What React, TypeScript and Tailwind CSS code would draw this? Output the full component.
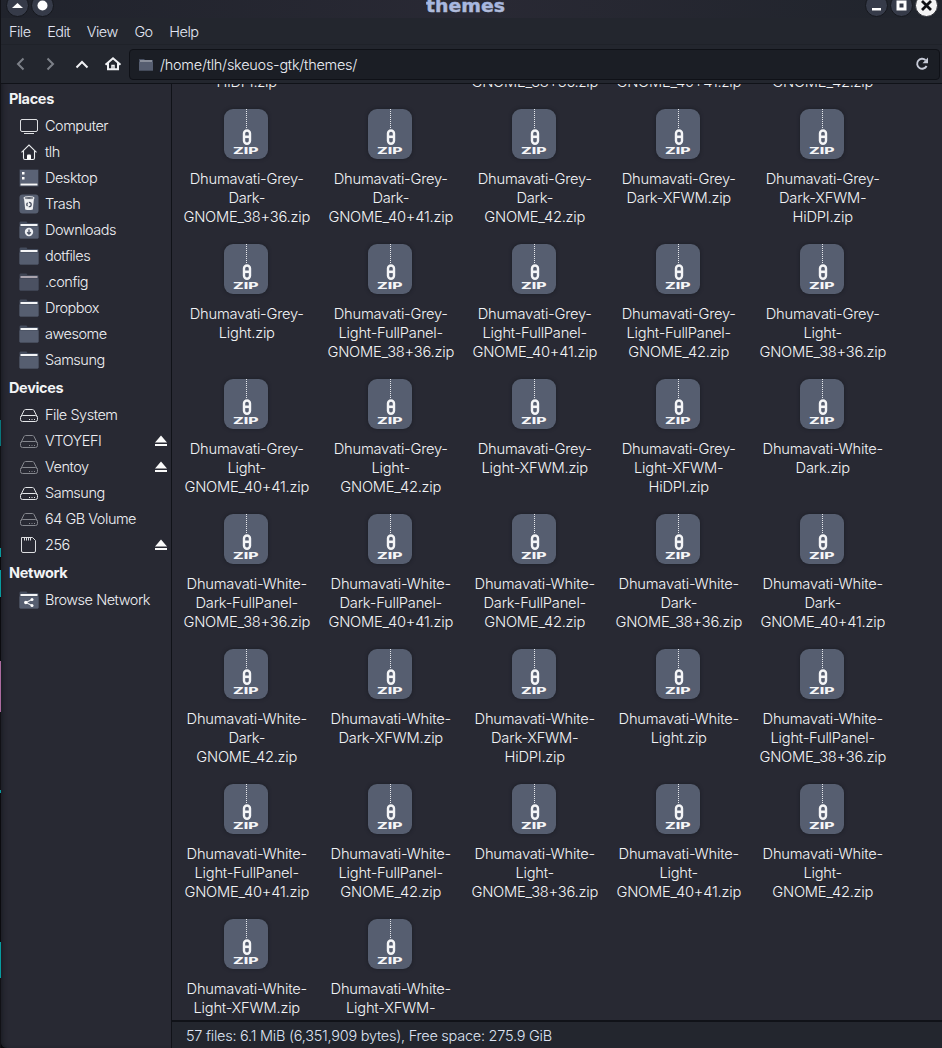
import React from "react";

const files: string[][][] = [
  [["", "", "HiDPI.zip"], ["", "", ""], ["", "", "GNOME_38+36.zip"], ["", "", "GNOME_40+41.zip"], ["", "", "GNOME_42.zip"]],
  [
    ["Dhumavati-Grey-", "Dark-", "GNOME_38+36.zip"],
    ["Dhumavati-Grey-", "Dark-", "GNOME_40+41.zip"],
    ["Dhumavati-Grey-", "Dark-", "GNOME_42.zip"],
    ["Dhumavati-Grey-", "Dark-XFWM.zip"],
    ["Dhumavati-Grey-", "Dark-XFWM-", "HiDPI.zip"],
  ],
  [
    ["Dhumavati-Grey-", "Light.zip"],
    ["Dhumavati-Grey-", "Light-FullPanel-", "GNOME_38+36.zip"],
    ["Dhumavati-Grey-", "Light-FullPanel-", "GNOME_40+41.zip"],
    ["Dhumavati-Grey-", "Light-FullPanel-", "GNOME_42.zip"],
    ["Dhumavati-Grey-", "Light-", "GNOME_38+36.zip"],
  ],
  [
    ["Dhumavati-Grey-", "Light-", "GNOME_40+41.zip"],
    ["Dhumavati-Grey-", "Light-", "GNOME_42.zip"],
    ["Dhumavati-Grey-", "Light-XFWM.zip"],
    ["Dhumavati-Grey-", "Light-XFWM-", "HiDPI.zip"],
    ["Dhumavati-White-", "Dark.zip"],
  ],
  [
    ["Dhumavati-White-", "Dark-FullPanel-", "GNOME_38+36.zip"],
    ["Dhumavati-White-", "Dark-FullPanel-", "GNOME_40+41.zip"],
    ["Dhumavati-White-", "Dark-FullPanel-", "GNOME_42.zip"],
    ["Dhumavati-White-", "Dark-", "GNOME_38+36.zip"],
    ["Dhumavati-White-", "Dark-", "GNOME_40+41.zip"],
  ],
  [
    ["Dhumavati-White-", "Dark-", "GNOME_42.zip"],
    ["Dhumavati-White-", "Dark-XFWM.zip"],
    ["Dhumavati-White-", "Dark-XFWM-", "HiDPI.zip"],
    ["Dhumavati-White-", "Light.zip"],
    ["Dhumavati-White-", "Light-FullPanel-", "GNOME_38+36.zip"],
  ],
  [
    ["Dhumavati-White-", "Light-FullPanel-", "GNOME_40+41.zip"],
    ["Dhumavati-White-", "Light-FullPanel-", "GNOME_42.zip"],
    ["Dhumavati-White-", "Light-", "GNOME_38+36.zip"],
    ["Dhumavati-White-", "Light-", "GNOME_40+41.zip"],
    ["Dhumavati-White-", "Light-", "GNOME_42.zip"],
  ],
  [
    ["Dhumavati-White-", "Light-XFWM.zip"],
    ["Dhumavati-White-", "Light-XFWM-"],
  ],
];

function ZipIcon() {
  return (
    <div className="flex h-[50px] w-[44px] flex-col items-center rounded-[9px] bg-[#565e70] shadow-[0_0_3px_1px_#20222b]">
      <svg width="44" height="37" viewBox="0 0 44 37" className="shrink-0">
        <path d="M22.5 0V20" stroke="#e6e8ec" strokeWidth="1" strokeDasharray="1 1" />
        <rect x="20" y="21.500" width="6" height="13.300" rx="3" fill="none" stroke="#f4f5f7" strokeWidth="2.400" />
        <path d="M20 27.800h6" stroke="#f4f5f7" strokeWidth="2.600" />
      </svg>
      <svg width="26" height="9" viewBox="0 0 26 9" className="shrink-0 overflow-visible">
        <text x="0" y="8" textLength="25.500" lengthAdjust="spacingAndGlyphs" fontFamily="Inter" fontSize="9.500" fontWeight="800" letterSpacing="0" fill="#f4f5f7">
          ZIP
        </text>
      </svg>
    </div>
  );
}

function File({ lines }: { lines: string[] }) {
  return (
    <div className="flex h-[135px] flex-col items-center">
      <ZipIcon />
      <div className="mt-[11px] text-center text-[14.700px] leading-[19px] tracking-[-0.23px] whitespace-nowrap text-[#f2f3f5]">
        {lines.map((l, i) => (
          <div key={i} className="h-[19px] pl-[1.500px]">{l}</div>
        ))}
      </div>
    </div>
  );
}

function Folder({ kind, dim }: { kind?: string; dim?: boolean }) {
  const body = dim ? "#4b5162" : "#565e70";
  return (
    <svg width="20" height="18" viewBox="0 0 20 18">
      <path d="M0.500 2Q0.500 0.500 1.500 0.500H7.500l1 1.500h10q1 0 1 1v13.500q0 1-1 1h-17q-1 0-1-1z" fill={dim ? "#3f4554" : "#444c5d"} />
      <path d="M0.500 5.500h19v11q0 1-1 1h-17q-1 0-1-1z" fill={body} />
      <path d="M1.500 4h17" stroke={dim ? "#aaa4ae" : "#f4f5f7"} strokeWidth="2" />
      {kind === "down" && (
        <>
          <circle cx="10" cy="11" r="4.200" fill="#eceef2" />
          <path d="M10 8.500v4M8.200 11.200l1.800 1.900 1.800-1.900" stroke="#4b5264" strokeWidth="1.300" fill="none" />
        </>
      )}
      {kind === "share" && (
        <>
          <path d="M13 8.500L7 11.500l6 3" stroke="#eceef2" strokeWidth="1.200" fill="none" />
          <circle cx="13" cy="8.500" r="1.500" fill="#fff" />
          <circle cx="6.800" cy="11.500" r="1.700" fill="#fff" />
          <circle cx="13" cy="14.500" r="1.500" fill="#fff" />
        </>
      )}
    </svg>
  );
}

function SideIcon({ kind }: { kind: string }) {
  switch (kind) {
    case "computer":
      return (
        <svg width="20" height="18" viewBox="0 0 20 18" fill="none" stroke="#dedfe2" strokeWidth="1">
          <rect x="1.500" y="2.500" width="17" height="12" rx="1.500" />
          <path d="M5 16.500h10" />
        </svg>
      );
    case "home":
      return (
        <svg width="20" height="18" viewBox="0 0 20 18" fill="none" stroke="#eceef0" strokeWidth="1.100">
          <path d="M2.500 9.300L10 2l7.500 7.300M4.500 8v7q0 1.500 1.500 1.500h8q1.500 0 1.500-1.500V8" />
          <path d="M8 16.500v-4q0-1 1-1h2q1 0 1 1v4z" fill="#fff" stroke="none" />
        </svg>
      );
    case "desktop":
      return (
        <svg width="20" height="18" viewBox="0 0 20 18">
          <path d="M0.500 0.500h19v17h-19z" fill="#454d5d" />
          <path d="M1 1h18v13H1z" fill="#5a6275" />
          <path d="M1.500 15.500h17" stroke="#f7f7f8" strokeWidth="2" />
          <path d="M3 3h2.500v2.500H3zM3 8h2.500v2.500H3z" fill="#fff" />
        </svg>
      );
    case "trash":
      return (
        <svg width="20" height="20" viewBox="0 0 20 20">
          <rect x="0.500" y="0.500" width="19" height="19" rx="3" fill="#565e70" />
          <path d="M5 4h10l-1.200 11.500q-3.800 1-7.600 0z" fill="#f1f2f4" />
          <ellipse cx="10" cy="4" rx="5.300" ry="1.300" fill="#3c4251" stroke="#f1f2f4" strokeWidth="1" />
          <circle cx="10" cy="10.500" r="2.200" fill="none" stroke="#4a5162" strokeWidth="1.300" strokeDasharray="3.400 1.200" />
        </svg>
      );
    case "drive":
    case "drivedim":
      return (
        <svg width="20" height="18" viewBox="0 0 20 18" fill="none" stroke={kind === "drive" ? "#e4e6e9" : "#85878e"} strokeWidth="1">
          <path d="M2 10.500L5 4.500Q5.500 3.500 6.500 3.500h7q1 0 1.500 1l3 6" />
          <rect x="1.500" y="9.500" width="17" height="6" rx="2" />
          <path d="M10 13.500h1M12.500 13.500h1M15 13.500h1" />
        </svg>
      );
    case "card":
      return (
        <svg width="20" height="18" viewBox="0 0 20 18" fill="none" stroke="#dcdde0" strokeWidth="1">
          <path d="M2.500 1.500h11l3 3v10.500q0 1.500-1.500 1.500H4q-1.500 0-1.500-1.500z" />
          <path d="M5.500 2v2.500M7.500 2v2.500M9.500 2v2.500M11.500 2v2.500" />
        </svg>
      );
    case "down":
    case "share":
      return <Folder kind={kind} />;
    case "dim":
      return <Folder dim />;
    default:
      return <Folder />;
  }
}

function Section({ title, items }: { title: string; items: [string, string, boolean?][] }) {
  return (
    <section>
      <h2 className="flex h-7 items-center pl-2 text-[14.500px] font-bold tracking-[-0.35px] text-[#f2f3f5]">{title}</h2>
      <ul>
        {items.map(([label, icon, eject]) => (
          <li key={label} className="flex h-[26px] items-center pr-[3px] pl-[18px]">
            <SideIcon kind={icon} />
            <span className="ml-1.5 flex-1 tracking-[-0.48px] whitespace-nowrap">{label}</span>
            {eject && (
              <svg width="14" height="12" viewBox="0 0 14 12" fill="#fafafa">
                <path d="M7 0.500L13 7.500H1zM1 9h12v2H1z" />
              </svg>
            )}
          </li>
        ))}
      </ul>
    </section>
  );
}

function WinButton({ children, light }: { children: React.ReactNode; light?: boolean }) {
  return (
    <div className={`flex size-[23px] shrink-0 items-center justify-center rounded-full border ${light ? "border-[#2a2c33] bg-[#f3f3f4]" : "border-[#15171d] bg-[#363b49]"}`}>
      <svg width="21" height="21" viewBox="0 0 21 21" className="shrink-0">{children}</svg>
    </div>
  );
}

export default function App() {
  return (
    <div className="flex h-[1048px] w-[942px] overflow-hidden bg-[#09090c] font-['Inter','Noto_Sans',sans-serif] text-[14.500px] font-light tracking-[-0.3px] text-[#eff0f3]">
      <div className="flex w-px shrink-0 flex-col">
        <div className="h-[420px] bg-[#111217]" />
        <div className="h-[26px] bg-[#08767c]" />
        <div className="h-[102px] bg-[#101115]" />
        <div className="h-[9px] bg-[#079ca0]" />
        <div className="h-[13px] bg-[#09090c]" />
        <div className="h-[27px] bg-[#079ca0]" />
        <div className="h-[64px] bg-[#0b0b0f]" />
        <div className="h-[51px] bg-[#ac6ba0]" />
        <div className="h-[78px] bg-[#111116]" />
        <div className="h-[3px] bg-[#079ca0]" />
        <div className="h-[149px] bg-[#0b0b0f]" />
        <div className="h-[36px] bg-[#079ca0]" />
        <div className="h-[70px] bg-[#111116]" />
      </div>
      <div className="flex min-w-0 flex-1 flex-col rounded-bl-[6px] bg-[#282933] shadow-[inset_4px_0_4px_-2px_#1b1d24]">
        <header className="flex h-[18px] shrink-0 items-start bg-linear-to-r from-[#20232c] via-[#292934] to-[#20242c] pr-[3px] pl-[5px]">
          <div className="-mt-[6px] flex w-[420px] gap-[2px]">
            <WinButton><path d="M5 13L10.500 8l5.500 5z" fill="#fff" /></WinButton>
            <WinButton><circle cx="10.500" cy="10.500" r="5" fill="#fff" /></WinButton>
          </div>
          <svg width="80" height="18" viewBox="0 0 80 18" className="shrink-0">
            <defs>
              <linearGradient id="title" x1="0" y1="0" x2="0" y2="1">
                <stop offset="0.300" stopColor="#a3b6e4" />
                <stop offset="1" stopColor="#b9bfd4" />
              </linearGradient>
            </defs>
            <text x="0" y="12" textLength="79" lengthAdjust="spacingAndGlyphs" fontFamily="DejaVu Sans" fontWeight="700" fontSize="17" letterSpacing="0" stroke="#a9b8dc" strokeWidth="0.400" fill="url(#title)">themes</text>
          </svg>
          <div className="-mt-[6px] ml-auto flex w-[74px] gap-[2px]">
            <WinButton><path d="M6 13h9v2.500H6z" fill="#fff" /></WinButton>
            <WinButton><rect x="7" y="7" width="7" height="7" fill="none" stroke="#fff" strokeWidth="3" /></WinButton>
            <WinButton light><path d="M6 6l9 9M15 6l-9 9" stroke="#101116" strokeWidth="2.800" /></WinButton>
          </div>
        </header>
        <nav className="flex h-[27px] shrink-0 items-center gap-[16.700px] border-b border-[#1f2229] bg-[#23262e] pt-[2px] pl-2 tracking-[-0.550px] text-[#e2e6f3]">
          <span>File</span><span>Edit</span><span>View</span><span>Go</span><span>Help</span>
        </nav>
        <div className="flex h-[39px] shrink-0 items-center border-b border-[#101218] bg-[#23262e] pr-[2px] pl-[10px]">
          <svg width="118" height="20" viewBox="0 0 118 20" fill="none" className="shrink-0">
            <path d="M12.500 4.500L7 10l5.500 5.500M36.500 4.500L42 10l-5.500 5.500" stroke="#7c8088" strokeWidth="2" />
            <path d="M65.500 13.500L71 8l5.500 5.500" stroke="#f0f1f4" strokeWidth="2" />
            <path d="M94.500 10.700L102 4.200l7.500 6.500M97 9v6.300h10V9" stroke="#f0f1f4" strokeWidth="2" />
            <path d="M101 15.500v-4h2v4" stroke="#f0f1f4" strokeWidth="1.500" />
          </svg>
          <div className="flex h-[31px] flex-1 items-center rounded-[4px] border border-[#0f1117] bg-[#1b1e25] pr-[9px] pl-[9px]">
            <svg width="14" height="13" viewBox="0 0 14 13">
              <path d="M0 1h5l1 1h8v10.500H0z" fill="#474f61" />
              <path d="M0 4h14v8.500H0z" fill="#565e70" />
              <path d="M1 3h12" stroke="#b5b9c1" strokeWidth="1.200" />
            </svg>
            <span className="ml-[7px] flex-1 pt-px tracking-[-0.27px] text-[#eceff5]">/home/tlh/skeuos-gtk/themes/</span>
            <svg width="16" height="16" viewBox="0 0 16 16" fill="none" stroke="#c7cbd8" strokeWidth="1.900">
              <path d="M12.600 10A5 5 0 1 1 11.500 4" />
              <path d="M14 1.500v5.800H8.500z" fill="#c7cbd8" stroke="none" />
            </svg>
          </div>
        </div>
        <div className="flex min-h-0 flex-1">
          <aside className="flex w-[171px] shrink-0 flex-col gap-[1px] border-r border-[#101218] pt-px">
            <Section title="Places" items={[["Computer", "computer"], ["tlh", "home"], ["Desktop", "desktop"], ["Trash", "trash"], ["Downloads", "down"], ["dotfiles", "folder"], [".config", "dim"], ["Dropbox", "folder"], ["awesome", "folder"], ["Samsung", "folder"]]} />
            <Section title="Devices" items={[["File System", "drive"], ["VTOYEFI", "drivedim", true], ["Ventoy", "drivedim", true], ["Samsung", "drive"], ["64 GB Volume", "drivedim"], ["256", "card", true]]} />
            <Section title="Network" items={[["Browse Network", "share"]]} />
          </aside>
          <main className="flex min-w-0 flex-1 flex-col">
            <div className="h-[936px] shrink-0 overflow-hidden">
              <div className="-mt-[110px] ml-[2px] grid grid-cols-[repeat(5,144px)]">
                {files.flat().map((lines, i) => <File key={i} lines={lines} />)}
              </div>
            </div>
            <footer className="flex flex-1 items-center border-t-2 border-[#101218] bg-[#23262e] pt-0.5 pl-[14px] tracking-[-0.25px] text-[#dde3f2]">
              57 files: 6.1 MiB (6,351,909 bytes), Free space: 275.9 GiB
            </footer>
          </main>
        </div>
      </div>
    </div>
  );
}
